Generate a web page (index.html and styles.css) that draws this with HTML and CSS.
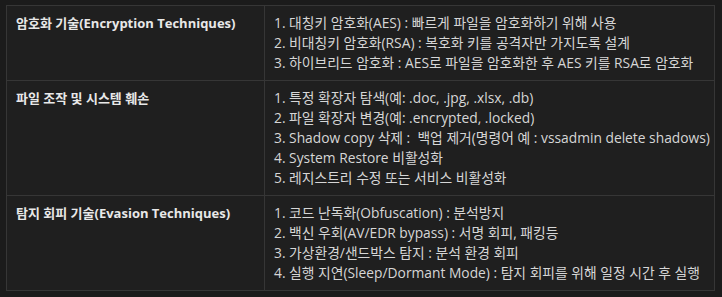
FILE: index.html
```html
<!DOCTYPE html>
<html lang="ko">
<head>
<meta charset="utf-8">
<link rel="stylesheet" href="styles.css">
</head>
<body>
<table class="tech">
  <tr>
    <th class="cat">암호화 기술(Encryption Techniques)</th>
    <td class="desc">
      <div>1. 대칭키 암호화(AES) : 빠르게 파일을 암호화하기 위해 사용</div>
      <div>2. 비대칭키 암호화(RSA) : 복호화 키를 공격자만 가지도록 설계</div>
      <div>3. 하이브리드 암호화 : AES로 파일을 암호화한 후 AES 키를 RSA로 암호화</div>
    </td>
  </tr>
  <tr>
    <th class="cat">파일 조작 및 시스템 훼손</th>
    <td class="desc">
      <div>1. 특정 확장자 탐색(예: .doc, .jpg, .xlsx, .db)</div>
      <div>2. 파일 확장자 변경(예: .encrypted, .locked)</div>
      <div>3. Shadow copy 삭제 :&nbsp; 백업 제거(명령어 예 : vssadmin delete shadows)</div>
      <div>4. System Restore 비활성화</div>
      <div>5. 레지스트리 수정 또는 서비스 비활성화</div>
    </td>
  </tr>
  <tr>
    <th class="cat">탐지 회피 기술(Evasion Techniques)</th>
    <td class="desc">
      <div>1. 코드 난독화(Obfuscation) : 분석방지</div>
      <div>2. 백신 우회(AV/EDR bypass) : 서명 회피, 패킹등</div>
      <div>3. 가상환경/샌드박스 탐지 : 분석 환경 회피</div>
      <div>4. 실행 지연(Sleep/Dormant Mode) : 탐지 회피를 위해 일정 시간 후 실행</div>
    </td>
  </tr>
</table>
</body>
</html>
```

FILE: styles.css
```css
html, body {
  margin: 0;
  padding: 0;
  background: #1b1b1b;
}
body {
  padding: 5px 7px 0 6px;
  font-family: "Open Sans", "Noto Sans CJK KR", sans-serif;
  font-size: 13.8px;
  line-height: 20px;
  color: #d6d6d6;
}
.tech {
  border-collapse: collapse;
  width: 709px;
  table-layout: fixed;
  background: #1f1f1f;
}
.tech th, .tech td {
  border: 1px solid #363636;
  padding: 7px 9px;
  vertical-align: top;
  text-align: left;
}
.cat {
  width: 239px;
  font-size: 13px;
  font-weight: 700;
  color: #e8e8e8;
}
.desc div {
  white-space: nowrap;
}
```
